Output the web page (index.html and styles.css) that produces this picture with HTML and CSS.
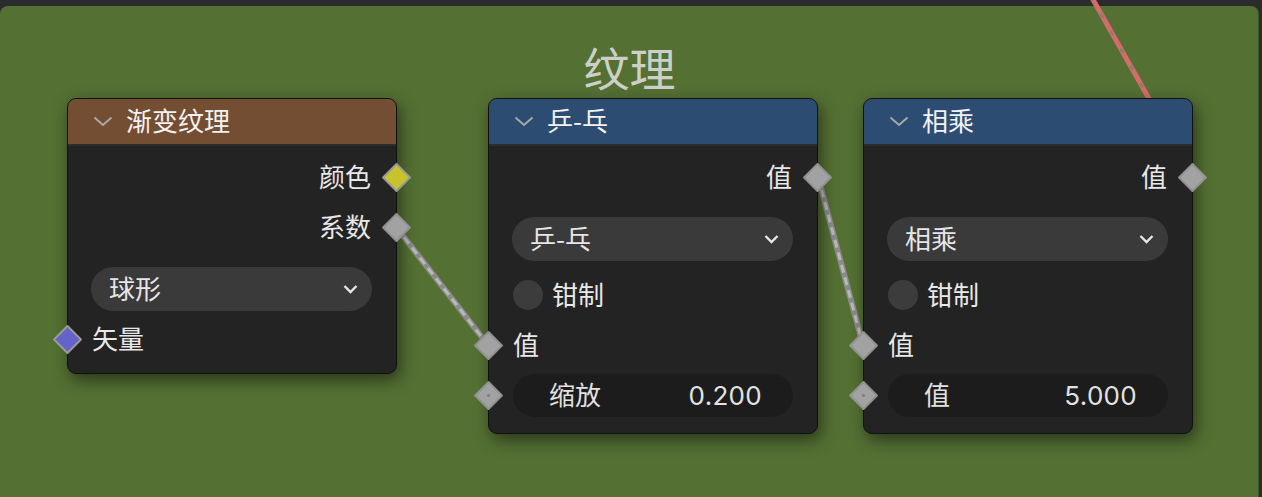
FILE: index.html
```html
<!DOCTYPE html>
<html lang="zh">
<head>
<meta charset="utf-8">
<title>纹理</title>
<link rel="stylesheet" href="styles.css">
</head>
<body>
<div class="canvas">
  <div class="frame">
    <div class="frame-title">纹理</div>
  </div>

  <svg class="links" width="1262" height="497" viewBox="0 0 1262 497">
    <g class="link-red">
      <path class="base" d="M1091 -4 L1152 104"/>
      <path class="dash" d="M1091 -4 L1152 104"/>
    </g>
    <g class="link-gray">
      <path class="base" d="M396 227 L488 345"/>
      <path class="dash" d="M396 227 L488 345"/>
      <path class="base" d="M818 177 L863 345"/>
      <path class="dash" d="M818 177 L863 345"/>
    </g>
  </svg>

  <div class="node node-a">
    <div class="node-header hdr-texture">
      <svg class="chev" width="20" height="11" viewBox="0 0 20 11"><polyline points="1.5,1.5 10,9 18.5,1.5"/></svg>
      <span>渐变纹理</span>
    </div>
    <div class="node-body">
      <div class="row out"><span>颜色</span><i class="socket sock-out sock-yellow"></i></div>
      <div class="row out"><span>系数</span><i class="socket sock-out"></i></div>
      <div class="dropdown"><span>球形</span><svg class="dd-chev" width="15" height="10" viewBox="0 0 15 10"><polyline points="1.5,2 7.5,8 13.5,2"/></svg></div>
      <div class="row in gap3"><i class="socket sock-in sock-purple"></i><span>矢量</span></div>
    </div>
  </div>

  <div class="node node-b">
    <div class="node-header hdr-math">
      <svg class="chev" width="20" height="11" viewBox="0 0 20 11"><polyline points="1.5,1.5 10,9 18.5,1.5"/></svg>
      <span>乒-乓</span>
    </div>
    <div class="node-body">
      <div class="row out"><span>值</span><i class="socket sock-out"></i></div>
      <div class="dropdown"><span>乒-乓</span><svg class="dd-chev" width="15" height="10" viewBox="0 0 15 10"><polyline points="1.5,2 7.5,8 13.5,2"/></svg></div>
      <div class="row check"><i class="checkbox"></i><span>钳制</span></div>
      <div class="row in"><i class="socket sock-in"></i><span>值</span></div>
      <div class="field-row"><i class="socket sock-in sock-dot"></i><div class="field"><span>缩放</span><span class="num">0.200</span></div></div>
    </div>
  </div>

  <div class="node node-c">
    <div class="node-header hdr-math">
      <svg class="chev" width="20" height="11" viewBox="0 0 20 11"><polyline points="1.5,1.5 10,9 18.5,1.5"/></svg>
      <span>相乘</span>
    </div>
    <div class="node-body">
      <div class="row out"><span>值</span><i class="socket sock-out"></i></div>
      <div class="dropdown"><span>相乘</span><svg class="dd-chev" width="15" height="10" viewBox="0 0 15 10"><polyline points="1.5,2 7.5,8 13.5,2"/></svg></div>
      <div class="row check"><i class="checkbox"></i><span>钳制</span></div>
      <div class="row in"><i class="socket sock-in"></i><span>值</span></div>
      <div class="field-row"><i class="socket sock-in sock-dot"></i><div class="field"><span>值</span><span class="num">5.000</span></div></div>
    </div>
  </div>
</div>
</body>
</html>
```

FILE: styles.css
```css
* { box-sizing: border-box; }

html, body {
  margin: 0;
  padding: 0;
  background: #2b2b2b;
}

body {
  font-family: "Inter", "Noto Sans CJK SC", "DejaVu Sans", sans-serif;
  color: #e8e8e8;
}

.canvas {
  position: relative;
  width: 1262px;
  height: 497px;
  overflow: hidden;
  background: #2b2b2b;
}

.frame {
  position: absolute;
  left: 0;
  top: 6px;
  width: 1259px;
  height: 520px;
  background: #547033;
  border-radius: 8px;
  box-shadow: inset -1px 0 0 #3f5527;
  padding-top: 33px;
}

.frame-title {
  text-align: center;
  font-family: "Noto Sans CJK SC", sans-serif;
  font-size: 46px;
  line-height: 54px;
  color: #cdd0c9;
}

.links {
  position: absolute;
  left: 0;
  top: 0;
}

.links path {
  fill: none;
  stroke-linecap: butt;
}

.link-gray .base {
  stroke: #8b8b8b;
  stroke-width: 6;
}

.link-gray .dash {
  stroke: #b9b9b9;
  stroke-width: 3;
  stroke-dasharray: 8 5;
}

.link-red .base {
  stroke: #d56b6b;
  stroke-width: 5;
}

.link-red .dash {
  stroke: #8f7c6a;
  stroke-width: 3;
  stroke-dasharray: 5 15;
}

.node {
  position: absolute;
  top: 98px;
  width: 330px;
  background: #232323;
  border: 1px solid #111111;
  border-radius: 9px;
  box-shadow: 3px 6px 16px rgba(0, 0, 0, 0.5);
  font-family: "Noto Sans CJK SC", sans-serif;
  font-size: 26px;
}

.node-a { left: 67px; }
.node-b { left: 488px; }
.node-c { left: 863px; }

.node-header {
  height: 47px;
  display: flex;
  align-items: center;
  gap: 13px;
  padding-left: 25px;
  padding-bottom: 3px;
  border-radius: 8px 8px 0 0;
  border-bottom: 2px solid #2d2d2d;
  color: #f2f2f2;
  line-height: 1;
}

.hdr-texture { background: #744e32; }
.hdr-math { background: #2c4d71; }

.chev {
  flex: none;
  margin-top: 3px;
}

.chev polyline {
  fill: none;
  stroke: #a9a9a9;
  stroke-width: 2;
}

.node-body {
  display: flex;
  flex-direction: column;
  padding: 6px 0 9px;
}

.node-b .node-body,
.node-c .node-body {
  padding-bottom: 16px;
}

.row {
  position: relative;
  height: 50px;
  display: flex;
  align-items: center;
  line-height: 1;
  padding-bottom: 3px;
}

.row.out {
  justify-content: flex-end;
  padding-right: 25px;
}

.row.in {
  padding-left: 24px;
}

.row.gap3 { margin-top: 3px; }

.row.check {
  margin-top: 9px;
  padding-left: 24px;
  gap: 9px;
}

.checkbox {
  width: 30px;
  height: 30px;
  border-radius: 50%;
  background: #3c3c3c;
  flex: none;
  margin-top: 3px;
}

.dropdown {
  margin: 15px 24px 0 23px;
  height: 44px;
  border-radius: 22px;
  background: #3a3a3a;
  display: flex;
  align-items: center;
  justify-content: space-between;
  padding: 0 14px 3px 18px;
  line-height: 1;
  color: #e6e6e6;
}

.dd-chev {
  margin-top: 3px;
}

.dd-chev polyline {
  fill: none;
  stroke: #e6e6e6;
  stroke-width: 2.4;
}

.field-row {
  position: relative;
  margin-top: 4px;
  height: 43px;
  padding: 0 24px;
}

.field {
  height: 43px;
  border-radius: 22px;
  background: #1c1c1c;
  display: flex;
  align-items: center;
  justify-content: space-between;
  padding: 0 31px 3px 36px;
  line-height: 1;
  color: #e2e2e2;
}

.num {
  font-family: "Inter", "DejaVu Sans", sans-serif;
  font-size: 26px;
  letter-spacing: 0.3px;
  margin-top: 3px;
}

.socket {
  position: absolute;
  top: 50%;
  width: 21px;
  height: 21px;
  margin-top: -10.5px;
  background: #a2a2a2;
  border: 2px solid #919191;
  transform: rotate(45deg);
  border-radius: 1px;
}

.row .socket { margin-top: -10.5px; top: 50%; }

.sock-out { right: -11px; }
.sock-in { left: -11.5px; }

.sock-yellow { background: #c9c32b; border-color: #9a9a9a; }
.sock-purple { background: #6363c9; border-color: #9a9a9a; }

.sock-dot::after {
  content: "";
  position: absolute;
  left: 7px;
  top: 7px;
  width: 3px;
  height: 3px;
  border-radius: 50%;
  background: #7c7c7c;
}
```
